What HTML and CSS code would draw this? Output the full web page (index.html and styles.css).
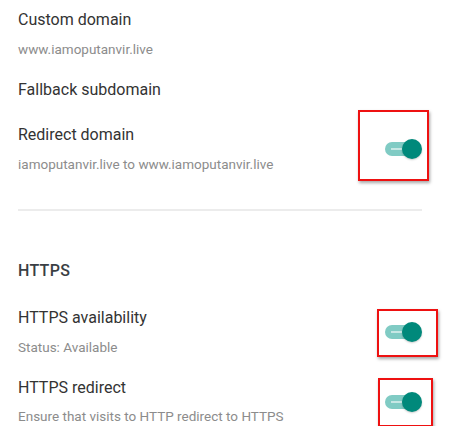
FILE: index.html
```html
<!DOCTYPE html>
<html>
<head>
<meta charset="utf-8">
<link rel="stylesheet" href="styles.css">
</head>
<body>
<div class="page">
  <div class="item item-custom">
    <div class="title">Custom domain</div>
    <div class="sub">www.iamoputanvir.live</div>
  </div>
  <div class="item item-fallback">
    <div class="title">Fallback subdomain</div>
  </div>
  <div class="row row-redirect">
    <div class="text">
      <div class="title">Redirect domain</div>
      <div class="sub">iamoputanvir.live to www.iamoputanvir.live</div>
    </div>
    <div class="toggle">
      <span class="track"><span class="line"></span></span>
      <span class="thumb"></span>
      <span class="mark mark-1"></span>
    </div>
  </div>
  <div class="divider"></div>
  <div class="heading">HTTPS</div>
  <div class="row row-avail">
    <div class="text">
      <div class="title">HTTPS availability</div>
      <div class="sub">Status: Available</div>
    </div>
    <div class="toggle">
      <span class="track"><span class="line"></span></span>
      <span class="thumb"></span>
      <span class="mark mark-2"></span>
    </div>
  </div>
  <div class="row row-https">
    <div class="text">
      <div class="title">HTTPS redirect</div>
      <div class="sub">Ensure that visits to HTTP redirect to HTTPS</div>
    </div>
    <div class="toggle">
      <span class="track"><span class="line"></span></span>
      <span class="thumb"></span>
      <span class="mark mark-3"></span>
    </div>
  </div>
</div>
</body>
</html>
```

FILE: styles.css
```css
html, body {
  margin: 0;
  padding: 0;
  background: #ffffff;
}
body {
  font-family: Roboto, "Liberation Sans", sans-serif;
  overflow: hidden;
}
.page {
  padding: 10px 28px 0 18px;
  display: flex;
  flex-direction: column;
}
.title {
  font-size: 16px;
  line-height: 20px;
  color: #333333;
}
.sub {
  font-size: 13.5px;
  line-height: 20px;
  color: #8c8c8c;
  margin-top: 8.5px;
}
.item-fallback {
  margin-top: 21px;
}
.row {
  display: flex;
  align-items: center;
  justify-content: space-between;
}
.row-redirect {
  margin-top: 25.5px;
}
.divider {
  height: 2px;
  background: #ececec;
  margin-top: 35px;
}
.heading {
  font-size: 16px;
  line-height: 20px;
  font-weight: 500;
  letter-spacing: 0.3px;
  color: #3a3f44;
  margin-top: 50px;
}
.row-avail {
  margin-top: 27.5px;
}
.row-https {
  margin-top: 21px;
}
.toggle {
  position: relative;
  width: 37px;
  height: 20px;
  flex: none;
}
.track {
  position: absolute;
  left: 0;
  top: 3px;
  width: 34px;
  height: 14px;
  border-radius: 7px;
  background: #80cbc4;
}
.line {
  position: absolute;
  left: 6px;
  top: 6px;
  width: 11px;
  height: 2px;
  background: rgba(255, 255, 255, 0.55);
}
.thumb {
  position: absolute;
  right: 0;
  top: 0;
  width: 20px;
  height: 20px;
  border-radius: 50%;
  background: #00897b;
  box-shadow: 0 1px 2px rgba(0, 0, 0, 0.2);
}
.mark {
  position: absolute;
  border: 2px solid #ee1111;
  box-shadow: 1px 2px 3px rgba(0, 0, 0, 0.35);
}
.mark-1 {
  left: -27px;
  right: -7px;
  top: -29px;
  bottom: -22px;
}
.mark-2 {
  left: -8px;
  right: -16px;
  top: -13px;
  bottom: -15px;
}
.mark-3 {
  left: -7px;
  right: -11px;
  top: -14px;
  bottom: -15px;
}
```
